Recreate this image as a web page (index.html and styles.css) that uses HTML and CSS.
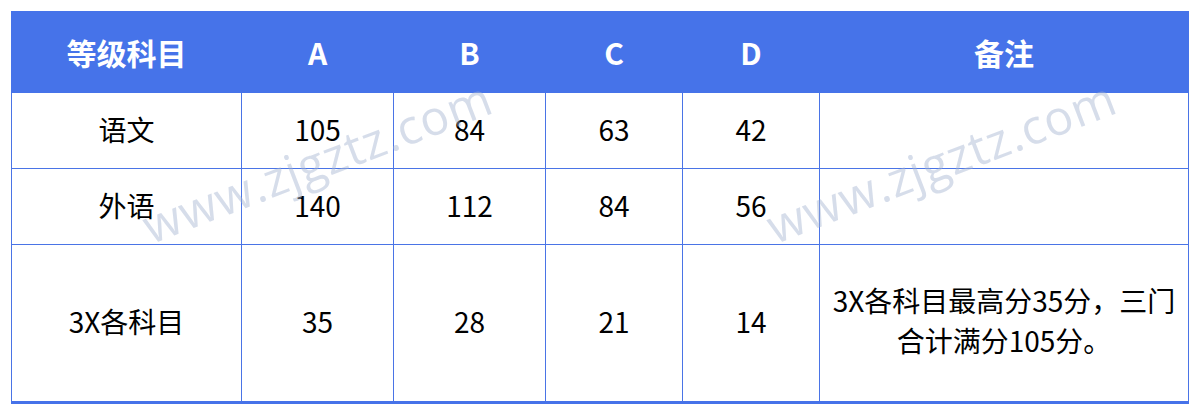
FILE: index.html
```html
<!DOCTYPE html>
<html lang="zh-CN">
<head>
<meta charset="utf-8">
<title>等级科目</title>
<link rel="stylesheet" href="styles.css">
</head>
<body>
<div class="page">
  <div class="board">
    <table class="grade-table">
      <colgroup>
        <col class="c-subject">
        <col class="c-a">
        <col class="c-b">
        <col class="c-c">
        <col class="c-d">
        <col class="c-note">
      </colgroup>
      <thead>
        <tr>
          <th>等级科目</th>
          <th>A</th>
          <th>B</th>
          <th>C</th>
          <th>D</th>
          <th>备注</th>
        </tr>
      </thead>
      <tbody>
        <tr class="row-short">
          <td>语文</td>
          <td>105</td>
          <td>84</td>
          <td>63</td>
          <td>42</td>
          <td></td>
        </tr>
        <tr class="row-short">
          <td>外语</td>
          <td>140</td>
          <td>112</td>
          <td>84</td>
          <td>56</td>
          <td></td>
        </tr>
        <tr class="row-tall">
          <td>3X各科目</td>
          <td>35</td>
          <td>28</td>
          <td>21</td>
          <td>14</td>
          <td class="note">3X各科目最高分35分，三门<br>合计满分105分。</td>
        </tr>
      </tbody>
    </table>
    <span class="watermark wm-1">www.zjgztz.com</span>
    <span class="watermark wm-2">www.zjgztz.com</span>
  </div>
</div>
</body>
</html>
```

FILE: styles.css
```css
html, body {
  margin: 0;
  padding: 0;
  background: #ffffff;
}

.page {
  padding: 11px 12px 0 11px;
  width: 1200px;
  height: 415px;
  box-sizing: border-box;
  overflow: hidden;
}

.board {
  position: relative;
  width: 1177px;
}

.grade-table {
  width: 1177px;
  table-layout: fixed;
  border-collapse: collapse;
  font-family: "Noto Sans CJK SC", "Noto Sans", sans-serif;
  font-size: 28px;
  color: #000000;
  text-align: center;
  border-bottom: 3px solid #4672e9;
}

.c-subject { width: 230px; }
.c-a { width: 152px; }
.c-b { width: 152px; }
.c-c { width: 137px; }
.c-d { width: 137px; }
.c-note { width: 369px; }

.grade-table th {
  height: 80px;
  padding: 0;
  background: #4673e9;
  color: #ffffff;
  font-weight: 700;
  font-size: 30px;
  border: 1px solid #4673e9;
}

.grade-table td {
  padding: 0;
  border: 1px solid #4a74e6;
  line-height: 40px;
}

.row-short td {
  height: 72px;
  padding-bottom: 3px;
}

.row-tall td {
  height: 152px;
  padding-bottom: 4px;
}

.grade-table td.note {
  padding: 0 8px 6px;
  height: 150px;
}

.watermark {
  position: absolute;
  font-family: "Open Sans", "Liberation Sans", sans-serif;
  font-size: 48px;
  color: rgba(165, 180, 208, 0.45);
  white-space: nowrap;
  transform: translate(-50%, -50%) rotate(-21deg);
  pointer-events: none;
  letter-spacing: 1px;
}

.wm-1 {
  left: 306px;
  top: 150px;
}

.wm-2 {
  left: 930px;
  top: 150px;
}
```
